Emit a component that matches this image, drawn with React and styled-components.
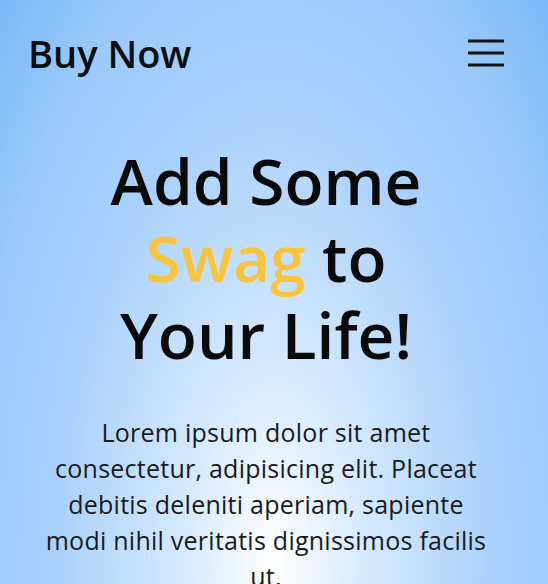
import React from "react";
import styled, { createGlobalStyle } from "styled-components";

const Global = createGlobalStyle`
  html, body { margin: 0; padding: 0; }
  body {
    min-height: 100vh;
    font-family: "Open Sans", "Liberation Sans", sans-serif;
    color: #111;
    background: radial-gradient(
      ellipse 387px 792px at 50% 560px,
      #ffffff 0%,
      #d6eafe 23%,
      #a8d0fc 58%,
      #9ccafa 78%,
      #7ab8f8 100%
    );
    background-color: #7ab8f8;
  }
`;

const Page = styled.div`
  width: 532px;
  min-height: 1000px;
`;

const Header = styled.header`
  display: flex;
  align-items: center;
  justify-content: space-between;
  padding: 27px 28px 0;
`;

const Brand = styled.div`
  font-size: 38px;
  font-weight: 600;
  color: #0d0d0d;
  line-height: normal;
`;

const MenuButton = styled.button`
  display: flex;
  align-items: center;
  justify-content: center;
  width: 36px;
  height: 30px;
  padding: 0;
  border: 0;
  background: none;
  cursor: pointer;
`;

const Hero = styled.section`
  display: flex;
  flex-direction: column;
  align-items: center;
  text-align: center;
  padding: 63px 40px 0;
`;

const Title = styled.h1`
  margin: 0;
  font-size: 64px;
  line-height: 77px;
  font-weight: 600;
  color: #0a0a0a;
`;

const Accent = styled.span`
  color: #f9c33a;
`;

const Lead = styled.p`
  margin: 41px 0 0;
  font-size: 25px;
  letter-spacing: 0.25px;
  line-height: 36px;
  font-weight: 400;
  color: #1a1a1a;
`;

function Hamburger() {
  return (
    <svg width="36" height="28" viewBox="0 0 36 28" fill="none">
      <path d="M1 2h34M1 14h34M1 26h34" stroke="#111" strokeWidth="3" strokeLinecap="round" />
    </svg>
  );
}

export default function App() {
  return (
    <>
      <Global />
      <Page>
        <Header>
          <Brand>Buy Now</Brand>
          <MenuButton aria-label="Menu">
            <Hamburger />
          </MenuButton>
        </Header>
        <Hero>
          <Title>
            Add Some
            <br />
            <Accent>Swag</Accent> to
            <br />
            Your Life!
          </Title>
          <Lead>
            Lorem ipsum dolor sit amet consectetur, adipisicing elit. Placeat
            debitis deleniti aperiam, sapiente modi nihil veritatis dignissimos
            facilis ut.
          </Lead>
        </Hero>
      </Page>
    </>
  );
}
